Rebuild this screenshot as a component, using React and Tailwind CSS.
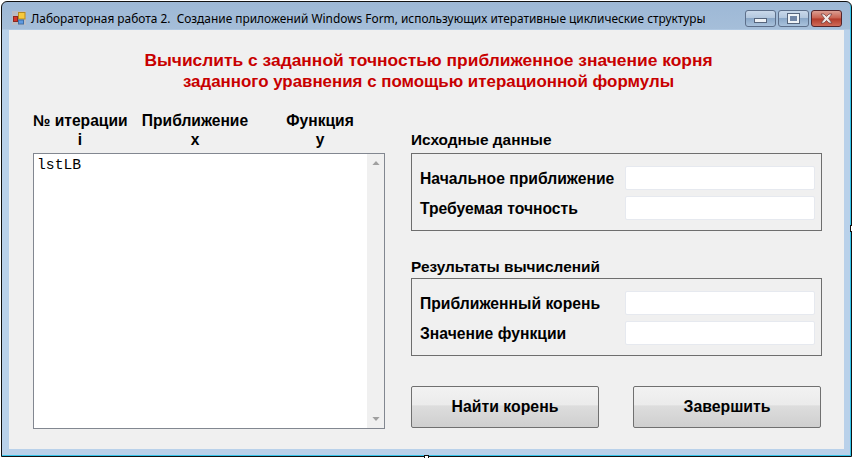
const font = { fontFamily: '"Liberation Sans", Arial, sans-serif' };

function Field({ label }) {
  return (
    <div className="flex items-center h-6">
      <span className="w-[213px] mt-[2px] pl-2 text-[15.7px] font-bold leading-6 text-black whitespace-nowrap">{label}</span>
      <div className="w-[190px] h-6 bg-white border border-[#e6e9ef] rounded-[2px]" />
    </div>
  );
}

function Group({ title, a, b, className, titleClass }) {
  return (
    <div className={className}>
      <div className={`${titleClass} text-[15.4px] font-bold leading-5 text-black whitespace-nowrap`}>{title}</div>
      <div className="mt-[3px] w-[411px] h-[78px] border border-[#6e6e6e] pt-3 flex flex-col gap-1.5">
        <Field label={a} />
        <Field label={b} />
      </div>
    </div>
  );
}

function Btn({ children }) {
  return (
    <button className="w-[188px] h-[42px] rounded-[2px] border border-[#707070] text-[15.8px] font-bold text-black bg-[linear-gradient(#f2f2f2_0%,#ebebeb_45%,#dddddd_47%,#cfcfcf_100%)]">
      {children}
    </button>
  );
}

function WinBtn({ className, children }) {
  return (
    <div className={`w-[31px] h-[17px] rounded-[3px] border flex items-center justify-center ${className}`}>
      {children}
    </div>
  );
}

export default function App() {
  return (
    <div className="relative w-[852px] h-[458px] bg-white pl-px pt-px" style={font}>
      <div className="w-[851px] h-[456px] border border-[#111] rounded-t-[6px] bg-[linear-gradient(#9db8d6_0px,#a5bed9_27px,#b9d1ea_28px)] shadow-[inset_-1px_-1px_0_#35c4ea] flex flex-col px-[7px] pb-[7px]">
        <div className="h-[28px] flex items-center shrink-0">
          <svg width="16" height="16" viewBox="0 0 16 16" className="ml-[2px] mt-[2px] shrink-0">
            <rect x="1" y="2" width="14" height="14" fill="#b9bcc4" />
            <rect x="2.5" y="7.5" width="4" height="5" fill="#d8352a" stroke="#8c2a20" />
            <rect x="7.5" y="3.5" width="6.5" height="6.5" fill="#f7c93c" stroke="#b48a1f" />
            <rect x="7.5" y="11" width="5" height="4" fill="#5f9ae0" stroke="#3d6fa8" />
          </svg>
          <span className="ml-[4px] mt-[6px] text-[11.9px] text-black whitespace-nowrap" style={{ fontFamily: '"Noto Sans", sans-serif' }}>
            Лабораторная работа 2.&nbsp; Создание приложений Windows Form, использующих итеративные циклические структуры
          </span>
          <div className="ml-auto mr-[2px] mt-[5px] flex gap-[2px]">
            <WinBtn className="border-[#5d6f8a] bg-[linear-gradient(#c9d8ea_0%,#b2c6dd_48%,#8ba8c8_50%,#a9c2dc_100%)]">
              <div className="w-[13px] h-[5px] mt-[4px] bg-[#eef2f6] border border-[#56657c]" />
            </WinBtn>
            <WinBtn className="border-[#5d6f8a] bg-[linear-gradient(#c9d8ea_0%,#b2c6dd_48%,#8ba8c8_50%,#a9c2dc_100%)]">
              <div className="w-[11px] h-[9px] bg-[#7186a6] border-2 border-[#eef2f6] outline outline-1 outline-[#56657c]" />
            </WinBtn>
            <WinBtn className="border-[#54242a] bg-[linear-gradient(#dc9e92_0%,#c8604e_48%,#b23a2a_52%,#cf6a58_100%)]">
              <svg width="15" height="11" viewBox="0 0 15 11">
                <path d="M2 1h3l2.5 2.5L10 1h3L9.5 5.5 13 10h-3L7.5 7.5 5 10H2l3.5-4.5z" fill="#f0e8e6" stroke="#6b3a3a" strokeWidth="0.7" />
              </svg>
            </WinBtn>
          </div>
        </div>
        <div className="flex-1 bg-[#f0f0f0] flex flex-col">
          <div className="mt-[20px] h-[42px] text-center text-[#c80000] font-bold leading-[21px] pl-[4px] whitespace-nowrap">
            <div className="text-[17.4px]">Вычислить с заданной точностью приближенное значение корня</div>
            <div className="text-[16.9px]">заданного уравнения с помощью итерационной формулы</div>
          </div>
          <div className="flex mt-[19px] pl-[24px]">
            <div className="w-[378px] shrink-0">
              <div className="flex h-[40px] text-center text-[15.6px] font-bold leading-[19px] text-black whitespace-nowrap">
                <div className="w-[94px]">№ итерации<br />i</div>
                <div className="w-[120px] ml-[8px]">Приближение<br />x</div>
                <div className="w-[100px] ml-[15px]">Функция<br />y</div>
              </div>
              <div className="w-[352px] h-[276px] mt-[2px] bg-white border border-[#828790] flex">
                <div className="flex-1 pl-[3px] pt-[3px] text-[14.7px] leading-4 text-black" style={{ fontFamily: '"Liberation Mono", monospace' }}>lstLB</div>
                <div className="w-[17px] bg-[#f0f0f0] flex flex-col items-center justify-between py-[7px]">
                  <svg width="8" height="4" viewBox="0 0 9 5"><path d="M4.5 0 9 5H0z" fill="#a0a0a0" /></svg>
                  <svg width="8" height="4" viewBox="0 0 9 5"><path d="M0 0h9L4.5 5z" fill="#a0a0a0" /></svg>
                </div>
              </div>
            </div>
            <div className="flex flex-col">
              <Group className="mt-[19px]" titleClass="h-[20px]" title="Исходные данные" a="Начальное приближение" b="Требуемая точность" />
              <Group className="mt-[26px]" titleClass="h-[18px]" title="Результаты вычислений" a="Приближенный корень" b="Значение функции" />
              <div className="flex gap-[34px] mt-[30px]">
                <Btn>Найти корень</Btn>
                <Btn>Завершить</Btn>
              </div>
            </div>
          </div>
        </div>
      </div>
      <div className="absolute left-[424px] top-[455px] w-[5px] h-[3px] bg-white border-x border-t border-[#111]" />
      <div className="absolute left-[850px] top-[225px] w-[2px] h-[7px] bg-white border-y border-l border-[#111]" />
    </div>
  );
}
